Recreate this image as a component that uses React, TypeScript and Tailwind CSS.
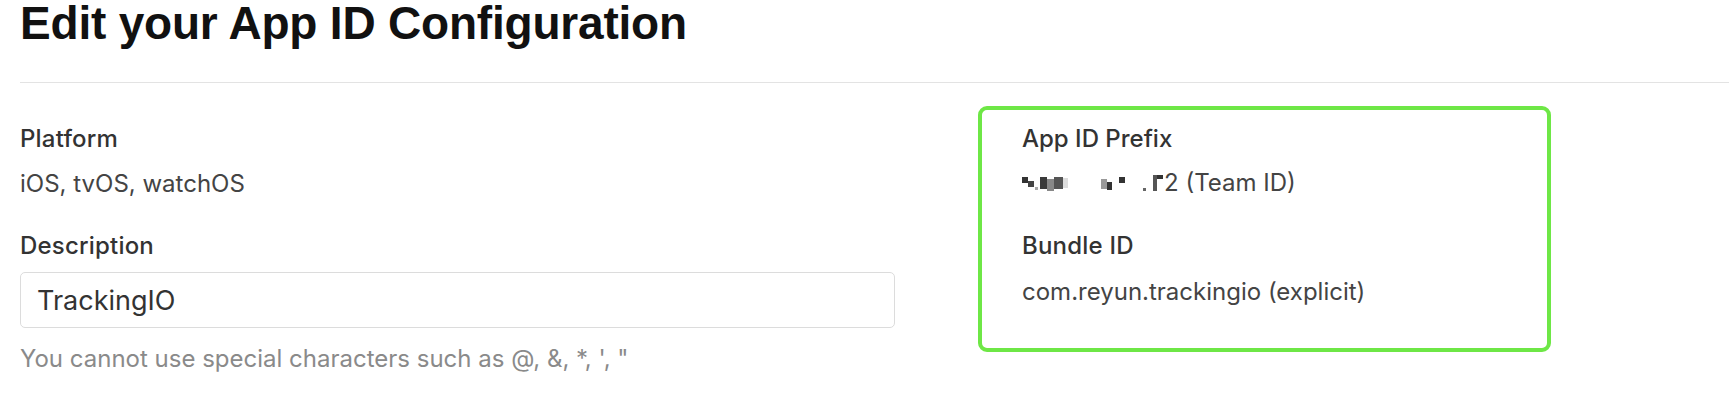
import React from 'react';

const titleFont = { fontFamily: '"Liberation Sans", Arial, Helvetica, sans-serif' };
const font = { fontFamily: 'Inter, "Liberation Sans", Arial, sans-serif' };

function CensoredId() {
  // pixelated team id from the screenshot
  return (
    <span className="inline-flex items-center mr-[1px]">
      <span className="inline-block w-[6px] h-[6px] bg-[#333] mt-[-6px]" />
      <span className="inline-block w-[6px] h-[6px] bg-[#444] mt-[2px]" />
      <span className="inline-block w-[3px] h-[3px] bg-[#aaa] mt-[10px] ml-[1px]" />
      <span className="inline-block w-[7px] h-[12px] bg-[#3a3a3a] ml-[2px]" />
      <span className="inline-block w-[7px] h-[12px] bg-[#888] mt-[4px]" />
      <span className="inline-block w-[9px] h-[12px] bg-[#555]" />
      <span className="inline-block w-[5px] h-[10px] bg-[#ddd]" />
      <span className="inline-block w-[33px]" />
      <span className="inline-block w-[6px] h-[10px] bg-[#999] mt-[2px]" />
      <span className="inline-block w-[5px] h-[8px] bg-[#333] mt-[6px]" />
      <span className="inline-block w-[7px]" />
      <span className="inline-block w-[6px] h-[6px] bg-[#333] mt-[-6px]" />
      <span className="inline-block w-[18px]" />
      <span className="inline-block w-[3px] h-[3px] bg-[#666] mt-[12px]" />
      <span className="inline-block w-[7px]" />
      <span className="inline-block w-[4px] h-[16px] bg-[#555]" />
      <span className="inline-block w-[6px] h-[4px] bg-[#333] mt-[-12px]" />
    </span>
  );
}

export default function App() {
  return (
    <div className="min-h-screen bg-white pl-[20px] text-[#333]" style={font}>
      <h1 className="text-[46px] leading-[46px] font-bold text-[#111] tracking-[-0.2px]" style={titleFont}>
        Edit your App ID Configuration
      </h1>
      <div className="mt-[36px] border-t border-[#e3e3e3]" />

      <div className="flex mt-[23px]">
        <div className="w-[875px] pt-[20px]">
          <div className="text-[24px] leading-[26px] font-medium text-[#333] tracking-[0.2px]">Platform</div>
          <div className="mt-[19px] text-[24px] leading-[26px] text-[#444]">iOS, tvOS, watchOS</div>

          <div className="mt-[36px] text-[24px] leading-[26px] font-medium text-[#333] tracking-[0.2px]">Description</div>
          <input
            type="text"
            defaultValue="TrackingIO"
            readOnly
            className="mt-[13px] w-full h-[56px] px-[16px] rounded-[5px] border border-[#dcdcdc] text-[27px] text-[#333] outline-none"
            style={font}
          />
          <p className="mt-[18px] text-[24px] leading-[26px] text-[#8a8a8a]">
            You cannot use special characters such as @, &amp;, *, ', "
          </p>
        </div>

        <div className="ml-[83px] w-[573px] h-[246px] rounded-[9px] border-[4px] border-[#6ee746] pl-[40px] pt-[16px]">
          <div className="text-[24px] leading-[26px] font-medium text-[#333]">App ID Prefix</div>
          <div className="mt-[18px] flex items-center text-[24px] leading-[26px] text-[#444]">
            <CensoredId />
            <span>2 (Team ID)</span>
          </div>
          <div className="mt-[37px] text-[24px] leading-[26px] font-medium text-[#333] tracking-[0.2px]">Bundle ID</div>
          <div className="mt-[20px] text-[24px] leading-[26px] text-[#444]">com.reyun.trackingio (explicit)</div>
        </div>
      </div>
    </div>
  );
}
